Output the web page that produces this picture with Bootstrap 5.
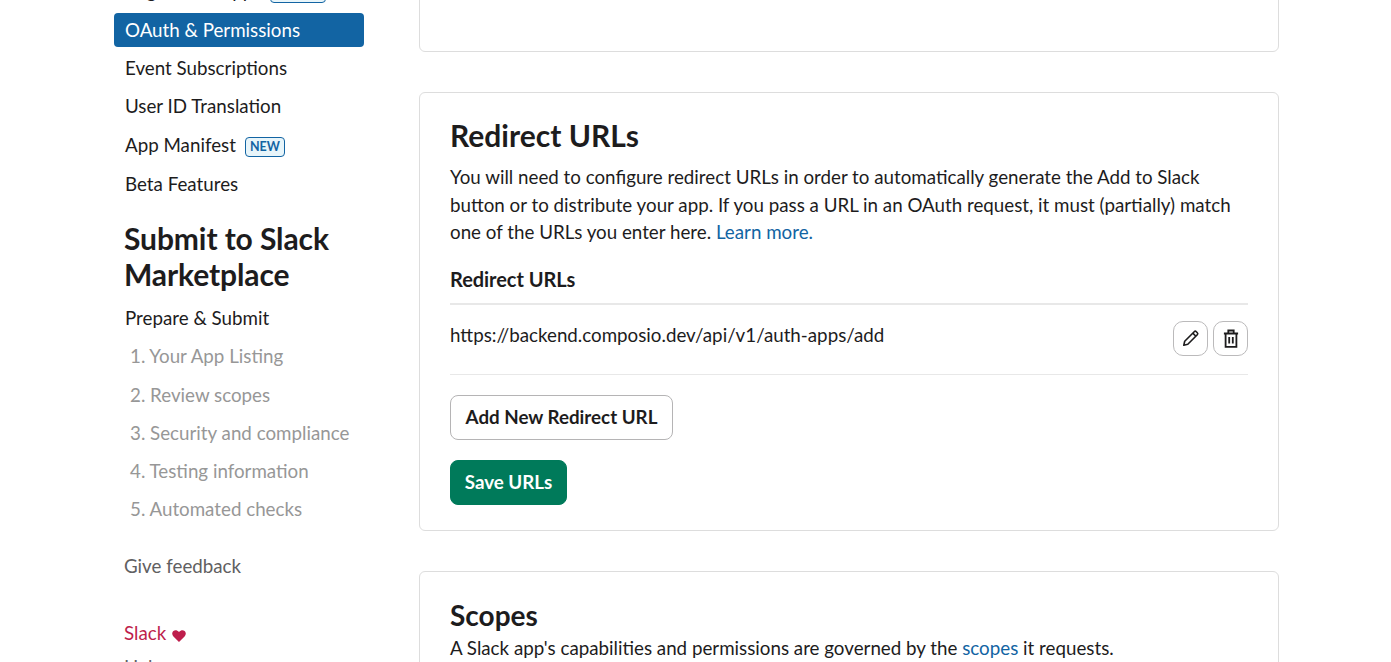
<!doctype html>
<html lang="en"><head><meta charset="utf-8">
<link href="https://cdn.jsdelivr.net/npm/bootstrap@5.3.0/dist/css/bootstrap.min.css" rel="stylesheet">
<style>
html,body{height:662px;overflow:hidden;background:#fff}
body{font-family:Lato,"Liberation Sans",sans-serif;font-size:18.75px;color:#1d1c1d;line-height:1.5}
.shell{width:1391px;height:662px;overflow:hidden;padding-left:114px;gap:55px}
.side{width:250px;flex:none;margin-top:-31px}
.sitem{display:block;padding:4px 11px;height:34px;line-height:26px;margin-bottom:4px;color:#1d1c1d;text-decoration:none;border-radius:4px;white-space:nowrap}
.sitem.on{background:#1264a3;color:#fff}
.sitem.has-tag{margin-top:5px;margin-bottom:5px}
.sitem.spread{word-spacing:6px}
.sitem.spread .tag{padding:0 3px;word-spacing:0}
.sublist .sitem{margin-bottom:4.3px}
.sublist .sitem.off{color:#979797;padding-left:16px}
.tag{display:inline-block;font-size:12.5px;font-weight:700;line-height:18px;height:20px;padding:0 4px;margin-left:9px;color:#1264a3;background:#e8f5fa;border:1px solid #1264a3;border-radius:4px;vertical-align:1px}
.sidehead{font-size:30px;font-weight:700;line-height:36px;margin:19px 0 9px 10px;color:#1d1c1d;letter-spacing:-.1px}
.foot{display:block;margin-left:10px;text-decoration:none;line-height:27px}
.f-feed{color:#616061;margin-top:26px}
.f-slack{color:#be1e4c;margin-top:40px}
.f-help{color:#616061;margin-top:7px}
.f-slack svg{margin-left:1px}
.main{width:860px;flex:none}
.pane{border:1px solid #dddddd;border-radius:6px;padding:24px 30px;margin-bottom:40px;background:#fff}
.pane-top{height:65px;margin-top:-13px}
.pane-mid{height:439px}
.pane h2{font-size:30px;font-weight:700;line-height:36px;margin:0 0 10px;color:#1d1c1d}
.desc{line-height:27.5px;margin:0}
.desc a{color:#1264a3;text-decoration:none}
.lblrow{font-size:20px;font-weight:700;line-height:27px;padding:20px 0 10px;border-bottom:2px solid #e8e8e8;letter-spacing:-.05px}
.urlrow{height:70px;border-bottom:1px solid #e8e8e8;padding-top:16px;line-height:27px}
.icon-gap{gap:5px}
.ico{width:35px;height:35px;border:1px solid #bbbabb;border-radius:10px;background:#fff;padding:0}
.btnw{display:block;height:45px;border-radius:8px;font-size:18.75px;font-weight:700;padding:0 0 2px;line-height:41px}
.b-add{width:223px;border:1px solid #b5b4b5;background:#fff;color:#1d1c1d;margin-top:20px}
.b-save{width:117px;border:1px solid #007a5a;background:#007a5a;color:#fff;margin-top:20px}
.pane-b{height:200px;padding-top:25px}
.pane.pane-b h2{font-size:28px;margin-bottom:1px}
</style></head><body>
<div class="shell d-flex">
<nav class="side">
<a class="sitem has-tag spread" href="#">Org Level Apps<span class="tag">LEGACY</span></a>
<a class="sitem on" href="#">OAuth &amp; Permissions</a>
<a class="sitem" href="#">Event Subscriptions</a>
<a class="sitem" href="#">User ID Translation</a>
<a class="sitem has-tag" href="#">App Manifest<span class="tag">NEW</span></a>
<a class="sitem" href="#">Beta Features</a>
<div class="sidehead">Submit to Slack Marketplace</div>
<div class="sublist">
<a class="sitem" href="#">Prepare &amp; Submit</a>
<a class="sitem off" href="#">1. Your App Listing</a>
<a class="sitem off" href="#">2. Review scopes</a>
<a class="sitem off" href="#">3. Security and compliance</a>
<a class="sitem off" href="#">4. Testing information</a>
<a class="sitem off" href="#">5. Automated checks</a>
</div>
<a class="foot f-feed" href="#">Give feedback</a>
<a class="foot f-slack" href="#">Slack <svg width="14" height="12" viewBox="0 0 16 14" fill="#be1e4c"><path d="M8 14 1.5 7.500C-.5 5.500-.3 2.600 1.500 1.100 3.300-.4 6 0 8 2.400 10 0 12.700-.4 14.500 1.100c1.800 1.500 2 4.400 0 6.400z"/></svg></a>
<a class="foot f-help" href="#">Help</a>
</nav>
<main class="main">
<section class="pane pane-top"></section>
<section class="pane pane-mid">
<h2>Redirect URLs</h2>
<p class="desc">You will need to configure redirect URLs in order to automatically generate the Add to Slack button or to distribute your app. If you pass a URL in an OAuth request, it must (partially) match one of the URLs you enter here. <a href="#">Learn more.</a></p>
<div class="lblrow">Redirect URLs</div>
<div class="urlrow d-flex justify-content-between align-items-start">
<span>https://backend.composio.dev/api/v1/auth-apps/add</span>
<div class="d-flex icon-gap">
<button class="ico d-flex align-items-center justify-content-center" aria-label="Edit"><svg width="18" height="18" viewBox="0 0 18 18" fill="none" stroke="#1d1c1d" stroke-width="1.6" stroke-linejoin="round"><path d="M1.800 16.200l.9-4L12.200 2.700a1.500 1.500 0 0 1 2.100 0l1 1a1.500 1.500 0 0 1 0 2.100L5.800 15.300z"/><path d="M10.800 4.100l3.100 3.100"/></svg></button>
<button class="ico d-flex align-items-center justify-content-center" aria-label="Delete"><svg width="16" height="19" viewBox="0 0 16 19" fill="none" stroke="#1d1c1d" stroke-width="1.800"><path d="M.9 4.500h14.200M5.300 4.500V1.500h5.400v3M2.600 4.500v13.300h10.800V4.500M6.200 8v6.500M9.800 8v6.500"/></svg></button>
</div>
</div>
<button class="btnw b-add">Add New Redirect URL</button>
<button class="btnw b-save">Save URLs</button>
</section>
<section class="pane pane-b">
<h2>Scopes</h2>
<p class="desc">A Slack app's capabilities and permissions are governed by the <a href="#">scopes</a> it requests.</p>
</section>
</main>
</div>
<script src="https://cdn.jsdelivr.net/npm/bootstrap@5.3.0/dist/js/bootstrap.bundle.min.js"></script>
</body></html>
